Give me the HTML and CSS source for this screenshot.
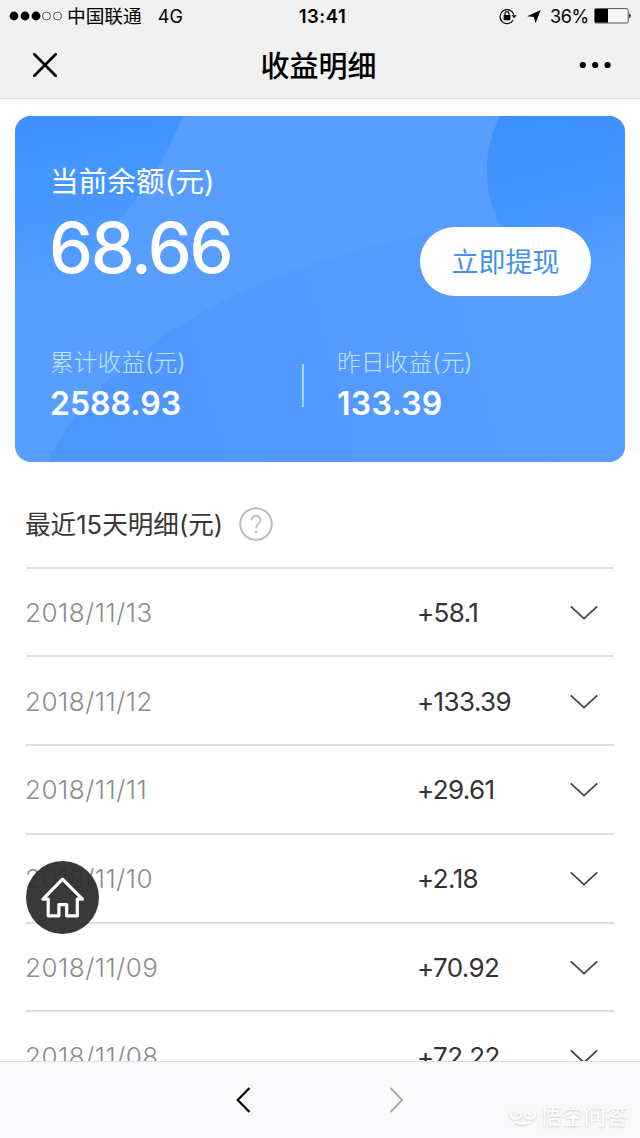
FILE: index.html
```html
<!DOCTYPE html>
<html lang="zh-CN">
<head>
<meta charset="utf-8">
<title>收益明细</title>
<link rel="stylesheet" href="styles.css">
</head>
<body>
<div class="app">
  <header class="top">
    <div class="status">
      <div class="status-left">
        <svg class="signal" width="54" height="12" viewBox="0 0 54 12"><circle cx="5" cy="6" r="4.4"/><circle cx="16" cy="6" r="4.4"/><circle cx="27" cy="6" r="4.4"/><g fill="none" stroke="#333" stroke-width=".8"><circle cx="37.5" cy="6" r="4"/><circle cx="48.5" cy="6" r="4"/></g></svg>
        <span class="carrier">中国联通</span>
        <span class="network">4G</span>
      </div>
      <span class="time">13:41</span>
      <div class="status-right">
        <svg class="lock" width="18" height="17" viewBox="0 0 18 17"><path d="M14.8 6.6A7 7 0 1 0 14.1 12.2" fill="none" stroke="#000" stroke-width="1.2"/><path d="M12.6 7.2h5l-2.5 3z"/><rect x="4.6" y="7" width="6.8" height="5.2" rx=".6"/><path d="M6 7.5V5.7a2 2 0 0 1 4 0v1.8" fill="none" stroke="#000" stroke-width="1.2"/></svg>
        <svg class="arrow" width="14" height="13" viewBox="0 0 14 13"><path d="M13.8 0L8.6 13L6.9 7L.2 6.3z"/></svg>
        <span class="percent">36%</span>
        <svg class="battery" width="38" height="16" viewBox="0 0 38 16"><rect x=".6" y=".6" width="33.6" height="14.4" rx="1.6" fill="#f6f6f6" stroke="#555"/><path d="M1 1h13v13.6H1z"/><path d="M35.3 5.2q3 2.6 0 5.2z"/></svg>
      </div>
    </div>
    <nav class="nav">
      <svg width="24" height="24" viewBox="0 0 24 24"><path d="M1.3 1.3L22.7 22.7M22.7 1.3L1.3 22.7" stroke="#000" stroke-width="2.7" stroke-linecap="round"/></svg>
      <h1 class="title">收益明细</h1>
      <svg width="32" height="8" viewBox="0 0 32 8"><circle cx="3.8" cy="4" r="3.1"/><circle cx="16.2" cy="4" r="3.1"/><circle cx="28.6" cy="4" r="3.1"/></svg>
    </nav>
  </header>

  <main class="content">
    <section class="card">
      <svg class="card-art" viewBox="0 0 610 346" preserveAspectRatio="none">
        <defs>
          <linearGradient id="corner" gradientUnits="userSpaceOnUse" x1="60" y1="0" x2="95" y2="165"><stop offset="0" stop-color="#3e92ff"/><stop offset=".5" stop-color="#4797ff"/><stop offset="1" stop-color="#579eff"/></linearGradient>
          <linearGradient id="disc" x1="0" y1="0" x2=".2" y2="1"><stop offset="0" stop-color="#3c91ff"/><stop offset=".5" stop-color="#4294ff"/><stop offset="1" stop-color="#579eff"/></linearGradient>
          <linearGradient id="hill" gradientUnits="userSpaceOnUse" x1="33" y1="346" x2="560" y2="200"><stop offset="0" stop-color="#4c96ff"/><stop offset=".55" stop-color="#5399ff"/><stop offset="1" stop-color="#579eff"/></linearGradient>
        </defs>
        <path fill="#579eff" d="M0 0h610v346H0z"/>
        <path fill="url(#corner)" d="M0 0H168Q142 65 95 115Q45 168 0 215z"/>
        <path fill="url(#hill)" d="M33 346C72 254 215 150 430 115L610 150V346z"/>
        <path fill="url(#disc)" d="M485 0C466 38 468 82 488 113C515 160 565 180 610 185V0z"/>
      </svg>
      <div class="balance-row">
        <div class="balance">
          <div class="balance-label">当前余额(元)</div>
          <div class="balance-value">68.66</div>
        </div>
        <button class="withdraw">立即提现</button>
      </div>
      <div class="stats">
        <div class="stat total"><div class="stat-label">累计收益(元)</div><div class="stat-value">2588.93</div></div>
        <div class="divider"></div>
        <div class="stat"><div class="stat-label">昨日收益(元)</div><div class="stat-value">133.39</div></div>
      </div>
    </section>

    <section class="details">
      <div class="details-head"><h2 class="details-title">最近15天明细(元)</h2>
        <svg width="34" height="34" viewBox="0 0 34 34" fill="none" stroke="#bcbcbc"><circle cx="17" cy="17" r="15.8" stroke-width="2"/><path d="M12.6 13.3C12.6 7.2 21.5 7.4 21.5 13C21.5 16.6 17.1 16.6 17.1 20.6V21.4" stroke-width="1.8"/><circle cx="17.1" cy="25" r="1.3" fill="#bcbcbc" stroke="none"/></svg>
      </div>
      <div class="row"><span class="date">2018/11/13</span><span class="amount">+58.1</span><svg class="chevron" viewBox="0 0 28 15"><path d="M.8 1.4L14 13.6L27.2 1.4"/></svg></div>
      <div class="row"><span class="date">2018/11/12</span><span class="amount">+133.39</span><svg class="chevron" viewBox="0 0 28 15"><path d="M.8 1.4L14 13.6L27.2 1.4"/></svg></div>
      <div class="row"><span class="date">2018/11/11</span><span class="amount">+29.61</span><svg class="chevron" viewBox="0 0 28 15"><path d="M.8 1.4L14 13.6L27.2 1.4"/></svg></div>
      <div class="row"><span class="date">2018/11/10</span><span class="amount">+2.18</span><svg class="chevron" viewBox="0 0 28 15"><path d="M.8 1.4L14 13.6L27.2 1.4"/></svg></div>
      <div class="row"><span class="date">2018/11/09</span><span class="amount">+70.92</span><svg class="chevron" viewBox="0 0 28 15"><path d="M.8 1.4L14 13.6L27.2 1.4"/></svg></div>
      <div class="row"><span class="date">2018/11/08</span><span class="amount">+72.22</span><svg class="chevron" viewBox="0 0 28 15"><path d="M.8 1.4L14 13.6L27.2 1.4"/></svg></div>
    </section>
  </main>

  <a class="home"><svg width="44" height="42" viewBox="0 0 44 42"><path d="M21.5 2.2L2 22.2H7.2V38.8H17.9V27.6H25.7V38.8H36.3V22.2H41.4z" fill="none" stroke="#fff" stroke-width="3.2" stroke-linejoin="round"/></svg></a>

  <footer class="toolbar">
    <svg class="back" width="15" height="26" viewBox="0 0 15 26"><path d="M13.5 1L1.7 13L13.5 25" fill="none" stroke="#000" stroke-width="2.2"/></svg>
    <svg class="forward" width="15" height="26" viewBox="0 0 15 26"><path d="M1.5 1L13.3 13L1.5 25" fill="none" stroke="#aaa" stroke-width="1.8"/></svg>
    <div class="watermark">
      <svg width="28" height="20" viewBox="0 0 28 20" fill="none" stroke="#fff" stroke-width="2.4" stroke-linecap="round"><path d="M2 7Q1 13 7.5 12.5Q13 12 12 8Q10 4.5 8 8M26 7Q27 13 20.5 12.5Q15 12 16 8Q18 4.5 20 8M7 16Q14 19 21 16"/></svg>
      <span>悟空问答</span>
    </div>
  </footer>
</div>
</body>
</html>
```
FILE: styles.css
```css
* { box-sizing: border-box; }
body { margin: 0; background: #fff; color: #000; font-family: Inter, "Noto Sans CJK SC", sans-serif; }
svg { display: block; flex: none; }
.app { position: relative; display: flex; flex-direction: column; height: 1138px; overflow: hidden; }
.top { flex: none; height: 99px; background: #f1f1f1; border-bottom: 1px solid #dedede; }
.status { display: grid; grid-template-columns: 1fr auto 1fr; align-items: center; height: 32px; padding: 0 8px 0 9px; font-size: 18px; }
.status-left, .status-right { display: flex; align-items: center; }
.status-right { justify-content: flex-end; }
.carrier { margin-left: 4px; font-size: 18.7px; line-height: 30px; padding-top: 2px; }
.network { margin-left: 16px; }
.time { font-weight: 600; font-size: 18.5px; letter-spacing: .5px; padding-left: 4px; }
.lock { margin-right: -1px; }
.arrow { margin: 0 9px 0 11px; }
.percent { letter-spacing: -.3px; margin-right: 5px; }
.nav { display: flex; align-items: center; justify-content: space-between; height: 66px; padding: 0 29px 0 33px; }
.title { margin: 0; padding: 3px 0 0 1px; font-size: 29px; font-weight: 500; line-height: 40px; }
.content { flex: 1; min-height: 0; overflow: hidden; padding: 17px 15px 0; }
.card { position: relative; height: 346px; border-radius: 16px; overflow: hidden; color: #fff; padding: 46px 34px 0 35px; }
.card-art { position: absolute; inset: 0; width: 100%; height: 100%; }
.balance-row { position: relative; display: flex; justify-content: space-between; height: 134px; }
.balance-label { font-size: 28.7px; line-height: 40px; font-weight: 400; }
.balance-value { font-size: 70px; line-height: 84px; margin-top: 4px; margin-left: -1px; font-weight: 500; letter-spacing: -2.4px; }
.withdraw { width: 171px; height: 69px; margin-top: 65px; padding: 2px 0 0; border: 0; border-radius: 35px; background: #fff; color: #438fec; font: 400 27px/67px Inter, "Noto Sans CJK SC", sans-serif; }
.stats { position: relative; display: flex; margin-top: 49px; }
.total { width: 252px; }
.stat-label { font-size: 23.8px; line-height: 36px; font-weight: 300; color: #c0e3ff; }
.stat-value { font-size: 32px; line-height: 40px; margin-top: 3px; font-weight: 600; }
.divider { width: 2px; height: 43px; margin: 19px 33px 0 0; background: #a7d0ff; }
.stat:last-child .stat-value { letter-spacing: .3px; }
.details { padding: 0 11px 0 11px; }
.details-head { display: flex; align-items: center; height: 104.5px; padding-top: 20px; gap: 16px; }
.details-title { margin: 1px 0 0 -1px; font-size: 25.6px; font-weight: 400; line-height: 40px; color: #383838; white-space: nowrap; }
.row { display: grid; grid-template-columns: 392px 1fr 28px; align-items: center; height: 88.75px; padding: 1px 16px 0 0; border-top: 2px solid #dedede; font-size: 26px; }
.date { color: #8d8d8d; font-weight: 300; letter-spacing: .5px; margin-left: -1px; }
.amount { color: #333; letter-spacing: -.6px; margin-left: -1px; }
.chevron { width: 28px; height: 15px; fill: none; stroke: #444; stroke-width: 1.8; }
.home { position: absolute; left: 26px; top: 861px; width: 73px; height: 73px; display: flex; align-items: center; justify-content: center; border-radius: 50%; background: rgba(45,45,46,.94); }
.toolbar { flex: none; display: flex; align-items: center; height: 77px; padding-left: 236px; background: #f9f9fb; border-top: 1px solid #dfe0e3; }
.forward { margin-left: 138px; }
.watermark { display: flex; align-items: center; gap: 3px; margin: 32px 0 0 105px; color: #fdfdfd; font-size: 22px; line-height: 30px; white-space: nowrap; filter: drop-shadow(0 1px 1px #ccc); }
```
